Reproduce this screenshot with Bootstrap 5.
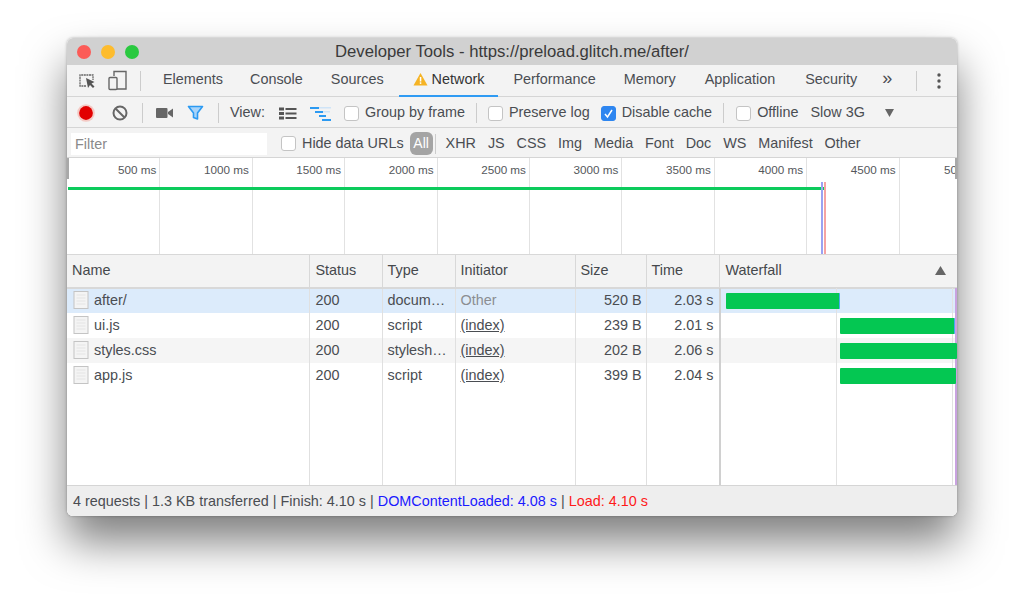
<!DOCTYPE html>
<html lang="en">
<head>
  <meta charset="UTF-8">
  <meta name="viewport" content="width=device-width, initial-scale=1">
  <title>Developer Tools</title>
  <link href="https://cdn.jsdelivr.net/npm/bootstrap@5.3.0/dist/css/bootstrap.min.css" rel="stylesheet">
  <style>
    html, body { background: #fff; height: 612px; overflow: hidden; }
    body { font-family: "Liberation Sans", Arial, sans-serif; font-size: 14.4px; color: #4a4d52; padding: 38px 67px 0; }
    .devwin { width: 890px; height: 478px; border-radius: 6px; overflow: hidden; background: #fff; }
    .winshadow { width: 890px; height: 478px; border-radius: 6px; box-shadow: 0 26px 44px rgba(0,0,0,.5), 0 0 3px rgba(0,0,0,.3); }
    .titlebar { height: 27px; background: #d1d1d1; color: #3a3a3a; font-size: 16.7px; position: relative; }
    .light { width: 14px; height: 14px; border-radius: 50%; }
    .lights { position: absolute; left: 10px; top: 7px; gap: 10px; }
    .bar-row { background: #f3f3f3; border-bottom: 1px solid #d5d5d5; }
    .tabsrow { height: 32px; padding-left: 11px; }
    .tabitem { height: 31px; line-height: 27px; margin-top: 1px; white-space: nowrap; }
    .tab-active { color: #333; border-bottom: 2px solid #2f9bf3; padding: 0 14px 2px 14px; margin: 1px -13px 0 -13px; }
    .tabgroup { gap: 28px; margin-left: 22px; }
    .vsep { width: 1px; height: 20px; background: #ccc; flex: none; }
    .toolsrow { height: 31px; padding: 2px 0 0 11px; }
    .filterrow { height: 30px; background: #f3f3f3; border-bottom: 1px solid #d5d5d5; padding: 2px 0 0 4px; }
    .filterbox { width: 196px; height: 22px; background: #fff; color: #8a8a8a; padding-left: 4px; line-height: 23px; }
    .fakecheck { width: 15px; height: 15px; border-radius: 3px; background: #fff; border: 1px solid #c4c4c4; flex: none; }
    .fakecheck-on { background: #2e86f0; border-color: #2e86f0; display: flex; align-items: center; justify-content: center; }
    .allbtn { width: 23px; height: 23px; border-radius: 6px; background: #a4a4a4; color: #fff; text-align: center; line-height: 23px; font-size: 14px; }
    .typegroup { gap: 11.9px; margin-left: 10px; }
    .overview { height: 97px; position: relative; background: #fff; border-bottom: 1px solid #d8d8d8; padding-left: 1px; overflow: hidden; }
    .tick { width: 92.4px; height: 96px; border-right: 1px solid #e2e2e2; text-align: right; padding: 3px 3px 0 0; font-size: 11.7px; flex: none; color: #55585c; white-space: nowrap; }
    .tick-last { border-right: 0; }
    .ovline { position: absolute; }
    .nettable { table-layout: fixed; width: 890px; border-collapse: collapse; }
    .nettable th { font-weight: 400; height: 33px; background: #f3f3f3; border-bottom: 2px solid #d8d8d8; border-right: 1px solid #d8d8d8; padding: 0 5px; color: #45484c; }
    .nettable td { height: 25px; padding: 0 5px; border-right: 1px solid #e0e0e0; white-space: nowrap; overflow: hidden; color: #4a4d52; }
    .nettable td:nth-child(2), .nettable th:nth-child(2) { padding-left: 6px; }
    .nettable th:last-child { padding-left: 6px; }
    .nettable td.wfcell { padding: 0; border-right: 0; }
    .nettable tr.picked td { background: #dcebfb; }
    .nettable tr.stripe td { background: #f5f5f5; }
    .nettable td.filler { height: 97px; background: #fff; }
    .txt-r { text-align: right; }
    .nettable td.size-cell { padding-right: 4px; }
    .txt-dim { color: #8b8e92 !important; }
    .wfbar { height: 16px; background: #04c752; border-radius: 1px; position: relative; z-index: 1; }
    .wfbar-tip { border-right: 1px solid #4aa8f0; }
    .netwrap { position: relative; }
    .wfline { position: absolute; top: 33px; width: 1px; height: 197px; }
    .docicon { vertical-align: -4px; margin: 0 5px 0 1px; }
    .statusrow { height: 31px; background: #eeeeee; border-top: 1px solid #d5d5d5; padding-left: 6px; line-height: 30px; white-space: nowrap; font-size: 14.4px; }
    .c-blue { color: #1a1aff; }
    .c-red { color: #ff1a1a; }
  </style>
</head>
<body>
<div class="winshadow">
<div class="devwin">
  <!-- title bar -->
  <div class="titlebar d-flex align-items-center justify-content-center">
    <div class="lights d-flex">
      <div class="light" style="background:#fc5b57"></div>
      <div class="light" style="background:#fdbc2e"></div>
      <div class="light" style="background:#2ac940"></div>
    </div>
    <span>Developer Tools - https://preload.glitch.me/after/</span>
  </div>

  <!-- tabs -->
  <div class="bar-row tabsrow d-flex align-items-center">
    <svg width="18" height="18" viewBox="0 0 18 18"><path d="M8 14H2V3h13v5" fill="none" stroke="#666" stroke-width="1.3" stroke-dasharray="2 .6"/><path d="M8 6l2 10 2-3 3 3 1.5-1.5-3-3 3-1.5z" fill="#555"/></svg>
    <svg width="20" height="22" viewBox="0 0 20 22" style="margin-left:12px"><path d="M6 6V1.5h12V19H9" fill="none" stroke="#666" stroke-width="1.4"/><rect x="1" y="7.5" width="8" height="12" rx="1" fill="none" stroke="#666" stroke-width="1.4"/></svg>
    <div class="vsep" style="margin-left:12px"></div>
    <div class="tabgroup d-flex">
      <div class="tabitem" style="margin-right:-1px">Elements</div>
      <div class="tabitem">Console</div>
      <div class="tabitem">Sources</div>
      <div class="tabitem tab-active d-flex align-items-center">
        <svg width="15" height="14" viewBox="0 0 15 14" style="margin-right:4px"><path d="M7.5 1L14.5 13.5H.5z" fill="#f5b324"/><rect x="6.8" y="5" width="1.5" height="4.5" fill="#fff"/><rect x="6.8" y="10.3" width="1.5" height="1.6" fill="#fff"/></svg>
        <span>Network</span>
      </div>
      <div class="tabitem">Performance</div>
      <div class="tabitem">Memory</div>
      <div class="tabitem" style="margin-left:1px">Application</div>
      <div class="tabitem" style="margin-left:2px">Security</div>
      <div class="tabitem" style="margin-left:-3px;font-size:18px;line-height:25px">»</div>
    </div>
    <div class="vsep" style="margin-left:24px"></div>
    <svg width="4" height="16" viewBox="0 0 4 16" style="margin-left:20px"><circle cx="2" cy="2" r="1.7" fill="#555"/><circle cx="2" cy="8" r="1.7" fill="#555"/><circle cx="2" cy="14" r="1.7" fill="#555"/></svg>
  </div>

  <!-- toolbar -->
  <div class="bar-row toolsrow d-flex align-items-center">
    <svg width="16" height="20" viewBox="0 0 20 20" style="overflow:visible"><circle cx="10" cy="10" r="11" fill="#f4c9c4"/><circle cx="10" cy="10" r="8.6" fill="#e20000"/></svg>
    <svg width="16" height="16" viewBox="0 0 16 16" style="margin-left:18px"><circle cx="8" cy="8" r="6.5" fill="none" stroke="#666" stroke-width="2"/><path d="M3.500 3.500l9 9" stroke="#666" stroke-width="2"/></svg>
    <div class="vsep" style="margin-left:14px"></div>
    <svg width="17" height="12" viewBox="0 0 17 12" style="margin-left:13px"><rect x="0" y="1" width="11.5" height="10" rx="1" fill="#666"/><path d="M12 5l5-3.5v9L12 7z" fill="#666"/></svg>
    <svg width="17" height="16" viewBox="0 0 17 16" style="margin-left:14px"><path d="M1.500 1.500h14L10.500 8v6l-4-1.500V8z" fill="#a8d4fa" stroke="#2c9af2" stroke-width="1.6" stroke-linejoin="round"/></svg>
    <div class="vsep" style="margin-left:14px"></div>
    <span style="margin-left:11px">View:</span>
    <svg width="18" height="13" viewBox="0 0 18 13" style="margin-left:14px"><path d="M0 .5h5v3H0zM0 5h5v3H0zM0 9.500h5v3H0zM6.500 1h11v2h-11zM6.500 5.500h11v2h-11zM6.500 10h11v2h-11z" fill="#555"/></svg>
    <svg width="21" height="15" viewBox="0 0 21 15" style="margin-left:13px"><path d="M0 1h9v2H0z" fill="#2c9af2"/><path d="M9 1h12v1.500H9z" fill="#cfe4f7"/><path d="M5 5h8v2H5zM9 9h7v2H9z" fill="#2c9af2"/><path d="M13 5h7v1.500h-7z" fill="#cfe4f7"/><path d="M12 13h9v2h-9z" fill="#2c9af2"/></svg>
    <div class="fakecheck" style="margin-left:13px"></div>
    <span style="margin-left:6px">Group by frame</span>
    <div class="vsep" style="margin-left:11px"></div>
    <div class="fakecheck" style="margin-left:11px"></div>
    <span style="margin-left:6px">Preserve log</span>
    <div class="fakecheck fakecheck-on" style="margin-left:11px"><svg width="11" height="11" viewBox="0 0 11 11"><path d="M2 6l2.500 3L9 2" fill="none" stroke="#fff" stroke-width="1.500"/></svg></div>
    <span style="margin-left:6px">Disable cache</span>
    <div class="vsep" style="margin-left:11px"></div>
    <div class="fakecheck" style="margin-left:12px"></div>
    <span style="margin-left:6px">Offline</span>
    <span style="margin-left:12px">Slow 3G</span>
    <svg width="9" height="8" viewBox="0 0 9 8" style="margin-left:20px"><path d="M0 0h9L4.500 8z" fill="#666"/></svg>
  </div>

  <!-- filter row -->
  <div class="filterrow d-flex align-items-center">
    <div class="filterbox">Filter</div>
    <div class="fakecheck" style="margin-left:14px"></div>
    <span style="margin-left:6px">Hide data URLs</span>
    <div class="allbtn" style="margin-left:6px">All</div>
    <div class="vsep" style="margin-left:2px"></div>
    <div class="typegroup d-flex">
      <span>XHR</span><span>JS</span><span>CSS</span><span>Img</span><span>Media</span><span>Font</span><span>Doc</span><span>WS</span><span>Manifest</span><span>Other</span>
    </div>
  </div>

  <!-- overview timeline -->
  <div class="overview d-flex">
    <div class="tick">500 ms</div>
    <div class="tick">1000 ms</div>
    <div class="tick">1500 ms</div>
    <div class="tick">2000 ms</div>
    <div class="tick">2500 ms</div>
    <div class="tick">3000 ms</div>
    <div class="tick">3500 ms</div>
    <div class="tick">4000 ms</div>
    <div class="tick">4500 ms</div>
    <div class="tick tick-last">5000 ms</div>
    <div class="ovline" style="left:1px;top:29px;width:757px;height:3px;background:#0ccb5c"></div>
    <div class="ovline" style="left:754px;top:24px;width:2px;height:72px;background:#9aa2f2"></div>
    <div class="ovline" style="left:757px;top:24px;width:2px;height:72px;background:#f5a3a3"></div>
    <div class="ovline" style="left:0;top:0;width:2px;height:21px;background:#a8a8a8"></div>
    <div class="ovline" style="right:0;top:0;width:2px;height:21px;background:#a8a8a8"></div>
  </div>

  <!-- requests table -->
  <div class="netwrap">
    <table class="nettable">
      <colgroup>
        <col style="width:242px"><col style="width:73px"><col style="width:73px"><col style="width:120px"><col style="width:71px"><col style="width:73px"><col>
      </colgroup>
      <thead>
        <tr>
          <th>Name</th><th>Status</th><th>Type</th><th>Initiator</th><th>Size</th><th>Time</th>
          <th style="border-right:0"><div class="d-flex justify-content-between align-items-center"><span>Waterfall</span><svg width="11" height="9" viewBox="0 0 11 9" style="margin-right:6px"><path d="M5.500 0L11 9H0z" fill="#666"/></svg></div></th>
        </tr>
      </thead>
      <tbody>
        <tr class="picked">
          <td><svg class="docicon" width="16" height="18" viewBox="0 0 16 18"><rect x="1" y=".5" width="14" height="17" fill="#f4f4f4" stroke="#c4c4c4"/><path d="M3.500 4h9M3.500 7h9M3.500 10h9M3.500 13h9" stroke="#e4e4e4"/></svg>after/</td>
          <td>200</td><td>docum…</td><td class="txt-dim">Other</td><td class="txt-r size-cell">520 B</td><td class="txt-r">2.03 s</td>
          <td class="wfcell"><div class="wfbar wfbar-tip" style="margin-left:6px;width:114px"></div></td>
        </tr>
        <tr>
          <td><svg class="docicon" width="16" height="18" viewBox="0 0 16 18"><rect x="1" y=".5" width="14" height="17" fill="#f4f4f4" stroke="#c4c4c4"/><path d="M3.500 4h9M3.500 7h9M3.500 10h9M3.500 13h9" stroke="#e4e4e4"/></svg>ui.js</td>
          <td>200</td><td>script</td><td><u>(index)</u></td><td class="txt-r size-cell">239 B</td><td class="txt-r">2.01 s</td>
          <td class="wfcell"><div class="wfbar wfbar-tip" style="margin-left:120px;width:115px"></div></td>
        </tr>
        <tr class="stripe">
          <td><svg class="docicon" width="16" height="18" viewBox="0 0 16 18"><rect x="1" y=".5" width="14" height="17" fill="#f4f4f4" stroke="#c4c4c4"/><path d="M3.500 4h9M3.500 7h9M3.500 10h9M3.500 13h9" stroke="#e4e4e4"/></svg>styles.css</td>
          <td>200</td><td>stylesh…</td><td><u>(index)</u></td><td class="txt-r size-cell">202 B</td><td class="txt-r">2.06 s</td>
          <td class="wfcell"><div class="wfbar" style="margin-left:120px;width:117px"></div></td>
        </tr>
        <tr>
          <td><svg class="docicon" width="16" height="18" viewBox="0 0 16 18"><rect x="1" y=".5" width="14" height="17" fill="#f4f4f4" stroke="#c4c4c4"/><path d="M3.500 4h9M3.500 7h9M3.500 10h9M3.500 13h9" stroke="#e4e4e4"/></svg>app.js</td>
          <td>200</td><td>script</td><td><u>(index)</u></td><td class="txt-r size-cell">399 B</td><td class="txt-r">2.04 s</td>
          <td class="wfcell"><div class="wfbar" style="margin-left:120px;width:116px"></div></td>
        </tr>
        <tr>
          <td class="filler"></td><td class="filler"></td><td class="filler"></td><td class="filler"></td><td class="filler"></td><td class="filler"></td><td class="filler wfcell"></td>
        </tr>
      </tbody>
    </table>
    <div class="wfline" style="left:652px;background:#d0d0d0;width:2px"></div>
    <div class="wfline" style="left:769px;background:#e2e2e2"></div>
    <div class="wfline" style="left:885px;background:#e2e2e2"></div>
    <div class="wfline" style="left:888px;background:#c9a3e0;width:2px"></div>
  </div>

  <!-- status bar -->
  <div class="statusrow">4 requests | 1.3 KB transferred | Finish: 4.10 s | <span class="c-blue">DOMContentLoaded: 4.08 s</span> | <span class="c-red">Load: 4.10 s</span></div>
</div>
</div>
</body>
</html>
